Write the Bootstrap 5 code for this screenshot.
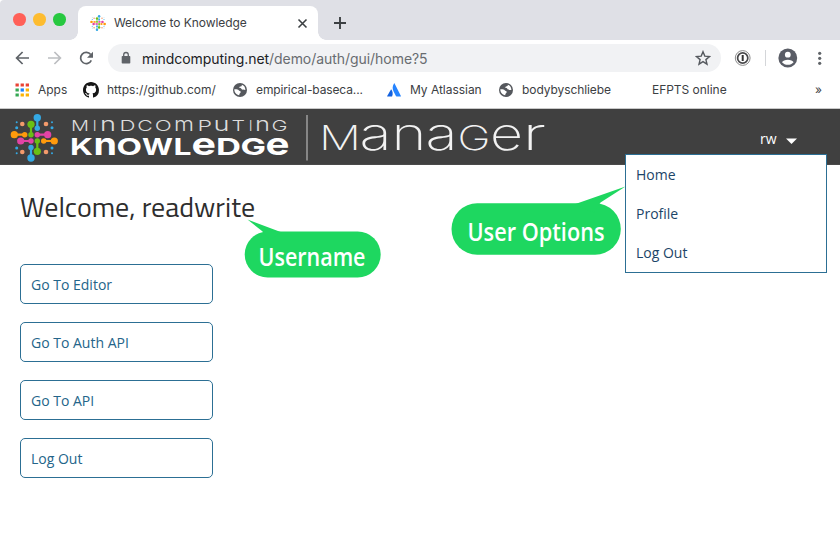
<!DOCTYPE html>
<html lang="en">
<head>
<meta charset="utf-8">
<meta name="viewport" content="width=device-width, initial-scale=1">
<title>Welcome to Knowledge</title>
<link href="https://cdn.jsdelivr.net/npm/bootstrap@5.3.0/dist/css/bootstrap.min.css" rel="stylesheet">
<style>
  body { width: 840px; height: 534px; overflow: hidden; font-family: "Open Sans", sans-serif; background: #fff; }
  svg { display: block; flex: none; }
  .chrome { font-family: Inter, sans-serif; color: #3c4043; }
  .tab-strip { height: 40px; background: #dfe0e6; padding: 6px 0 0 13px; border-top-left-radius: 4px; }
  .light { width: 12.6px; height: 12.6px; margin-right: 7.4px; border-radius: 50%; margin-top: 7.4px; }
  .light-close { background: #ff6058; }
  .light-min { background: #fdbc30; }
  .light-max { background: #27c840; }
  .page-tab { width: 240px; height: 34px; margin-left: 5px; padding: 0 10px 0 12px; background: #fff; border-radius: 8px 8px 0 0; font-size: 12px; letter-spacing: -.06px; position: relative; }
  .page-tab::before, .page-tab::after { content: ""; position: absolute; bottom: 0; width: 8px; height: 8px; }
  .page-tab::before { left: -8px; background: radial-gradient(circle at 0 0, transparent 7.5px, #fff 8px); }
  .page-tab::after { right: -8px; background: radial-gradient(circle at 100% 0, transparent 7.5px, #fff 8px); }
  .tool-row { height: 36px; padding-left: 15px; }
  .address { width: 613px; height: 28px; margin-left: 14px; padding: 0 10px 0 12px; border-radius: 14px; background: #f1f2f4; font-size: 14px; letter-spacing: -.05px; color: #202124; }
  .address .path { color: #686c70; }
  .marks { display: grid; grid-template-columns: 68px 150px 154px 112px 153px 163px 10px; height: 33px; padding: 0 0 5px 15px; font-size: 12px; letter-spacing: -.03px; align-items: center; border-bottom: 1px solid #c9c9c9; white-space: nowrap; }
  .site-bar { height: 56px; background: #404040; border-bottom: 1px solid #4a4a4a; }
  .site-bar > svg { overflow: visible; }
  .user-menu { width: 202px; color: #fff; font-size: 14px; padding: 19px 0 0 135px; margin-right: 13px; height: 56px; position: relative; }
  .options { position: absolute; left: 0; top: 45px; width: 202px; height: 119px; background: #fff; border: 1px solid #2c6f94; padding: 0 10px; z-index: 2; }
  .options a { display: block; height: 39px; line-height: 40px; color: #1c4568; text-decoration: none; font-size: 14px; }
  .greeting { font-family: "Titillium Web", Roboto, sans-serif; font-size: 28px; line-height: 34px; color: #2e2e2e; margin: 0; font-weight: 400; }
  .go-list { gap: 18px; margin-top: 40px; }
  .go-btn { width: 193px; height: 40px; border: 1px solid #2c6f94; border-radius: 5px; color: #24658a; font-size: 14px; text-align: left; padding: 0 10px; line-height: 39px; }
  .callouts { position: absolute; left: 240px; top: 180px; z-index: 3; pointer-events: none; }
</style>
</head>
<body>
<svg width="0" height="0" class="position-absolute">
  <defs>
    <g id="emblem">
      <g stroke-width="2.2">
        <path stroke="#34a9e4" d="M37.300 117.700v10.600M31 147.300V158"/>
        <path stroke="#6abf14" d="M31 124.300v10.400M37.300 141v10.300"/>
        <path stroke="#e143a5" d="M37.300 134.700h10.400M20.700 141H31"/>
        <path stroke="#ff9a0c" d="M14.300 134.700h10.400M43.700 141h10.600"/>
      </g>
      <g fill="#34a9e4"><circle cx="37.3" cy="117.7" r="3.7"/><circle cx="37.3" cy="128.3" r="2.7"/><circle cx="31" cy="147.5" r="2.7"/><circle cx="31" cy="158" r="3.7"/>
        <circle cx="16.7" cy="122.3" r="1"/><circle cx="16.7" cy="127.7" r="1.5"/><circle cx="52" cy="122.3" r="1"/><circle cx="52" cy="127.7" r="1.5"/><circle cx="16.7" cy="148" r="1.5"/><circle cx="16.7" cy="153.3" r="1"/><circle cx="52" cy="148" r="1.5"/><circle cx="52" cy="153.3" r="1"/></g>
      <g fill="#6abf14"><circle cx="31" cy="124.3" r="3.6"/><circle cx="31" cy="134.7" r="2.7"/><circle cx="37.3" cy="141" r="2.7"/><circle cx="37.3" cy="151.3" r="3.6"/></g>
      <g fill="#e143a5"><circle cx="37.3" cy="134.7" r="2.7"/><circle cx="47.7" cy="134.7" r="3.6"/><circle cx="20.7" cy="141" r="3.6"/><circle cx="31" cy="141" r="2.7"/></g>
      <g fill="#ff9a0c"><circle cx="14.3" cy="134.7" r="3.6"/><circle cx="24.7" cy="134.7" r="2.7"/><circle cx="43.7" cy="141" r="2.7"/><circle cx="54.3" cy="141" r="3.6"/></g>
      <g fill="#f39a6b"><circle cx="22.3" cy="124" r="2.3"/><circle cx="46" cy="124" r="2.3"/><circle cx="22.3" cy="152" r="2.3"/><circle cx="46" cy="152" r="2.3"/></g>
    </g>
    <g id="globe"><circle cx="7" cy="7" r="7" fill="#55585d"/><path d="M1.300 6.300c1.900 0 3.700-.2 4.400 1 .5 1 2 .4 2 1.700 0 1.100-1.500 1.100-1.500 3.200-2.800-.3-4.900-2.600-4.900-5.900z" fill="#fff"/><path d="M8.800 1.700c.2 1.500-.7 1.700-1.700 1.800-.9.100-.3 1.100-1.500 1.200 2 .1 2.500.4 2.900 1.400.5 1.200 2 .6 3.900 1C12.300 4.300 11.200 2.300 8.800 1.700z" fill="#fff"/></g>
  </defs>
</svg>

<header class="chrome">
  <div class="tab-strip d-flex">
    <span class="light light-close"></span>
    <span class="light light-min"></span>
    <span class="light light-max"></span>
    <div class="page-tab d-flex align-items-center">
      <svg width="16" height="16" viewBox="10 114 48 48"><use href="#emblem"/></svg>
      <span class="ms-2 flex-grow-1 text-nowrap">Welcome to Knowledge</span>
      <svg width="11" height="11" viewBox="0 0 11 11" stroke="#3c4043" stroke-width="1.6"><path d="M1.500 1.500l8 8M9.500 1.500l-8 8"/></svg>
    </div>
    <svg width="12" height="12" viewBox="0 0 12 12" class="ms-3" style="margin-top:11px" stroke="#3c4043" stroke-width="1.9"><path d="M6 0v12M0 6h12"/></svg>
  </div>

  <div class="tool-row d-flex align-items-center">
    <svg width="79" height="16" viewBox="0 0 79 16" fill="none" stroke-width="1.7">
      <path d="M14 8H2M7.600 2L1.600 8l6 6" stroke="#5f6368"/>
      <path d="M33 8h12M39.400 2l6 6-6 6" stroke="#bcbec1"/>
      <path d="M76.300 10.400A5.600 5.600 0 1 1 75.700 4.600" stroke="#5f6368"/><path d="M78 1.700v6h-6z" fill="#5f6368"/>
    </svg>
    <div class="address d-flex align-items-center">
      <svg width="12" height="14" viewBox="0 0 12 14"><rect x="1.700" y="5" width="8.600" height="7.600" rx=".8" fill="#5f6368"/><path d="M3.700 5.500V3.800a2.300 2.300 0 0 1 4.600 0v1.700" fill="none" stroke="#5f6368" stroke-width="1.300"/></svg>
      <span class="flex-grow-1" style="margin-left:10px">mindcomputing.net<span class="path">/demo/auth/gui/home?5</span></span>
      <svg width="16" height="16" viewBox="0 0 16 16" fill="none" stroke="#55595e" stroke-width="1.400"><path d="M8 1.700l1.800 4.400 4.700.4-3.600 3.100 1.100 4.600L8 11.700l-4 2.500 1.100-4.600L1.500 6.500l4.700-.4z"/></svg>
    </div>
    <svg width="106" height="20" viewBox="721 48 106 20">
      <circle cx="742.700" cy="58" r="7.400" fill="#fff" stroke="#8b8b8b" stroke-width="1"/><circle cx="742.700" cy="58" r="5.100" fill="#fff" stroke="#48484a" stroke-width="1.700"/><path d="M742.700 55v6" stroke="#333" stroke-width="2"/>
      <path d="M765.500 50v16" stroke="#d4d6d9"/>
      <circle cx="787.800" cy="58" r="9.400" fill="#5a5d66"/><circle cx="787.800" cy="54.700" r="2.900" fill="#fff"/><path d="M782 62.300c1.300-3.500 10.300-3.500 11.600 0-2.700 3.400-8.900 3.400-11.600 0z" fill="#fff"/>
      <g fill="#5f6368"><circle cx="819.700" cy="53.300" r="1.600"/><circle cx="819.700" cy="58.300" r="1.600"/><circle cx="819.700" cy="63.300" r="1.600"/></g>
    </svg>
  </div>

  <nav class="marks">
    <span class="d-flex align-items-center"><svg width="15" height="14" viewBox="0 0 15 14"><g fill="#ea4335"><path d="M.5.500h3.300v3H.5zM5.600.500h3.300v3H5.600zM10.700.500H14v3h-3.300z"/></g><g fill="#34a853"><path d="M.5 5.400h3.300v3.200H.5zM.5 10.400h3.300v3.200H.5z"/></g><path d="M5.600 5.400h3.300v3.200H5.600z" fill="#1a84ff"/><path d="M10.700 5.400H14v3.200h-3.300zM5.600 10.400h3.300v3.200H5.600zM10.700 10.400H14v3.200h-3.300z" fill="#fbb305"/></svg><span class="ms-2">Apps</span></span>
    <span class="d-flex align-items-center"><svg width="16" height="16" viewBox="0 0 16 16"><path fill="#161616" d="M8 0C3.580 0 0 3.580 0 8c0 3.540 2.290 6.530 5.470 7.590.4.070.55-.17.55-.38 0-.19-.01-.82-.01-1.490-2.010.37-2.530-.49-2.690-.94-.09-.23-.48-.94-.82-1.130-.28-.15-.68-.52-.01-.53.63-.01 1.080.58 1.230.82.72 1.210 1.870.87 2.330.66.070-.52.28-.87.51-1.070-1.780-.2-3.640-.89-3.640-3.950 0-.87.31-1.590.82-2.150-.08-.2-.36-1.020.08-2.120 0 0 .67-.21 2.200.82.640-.18 1.320-.27 2-.27s1.360.09 2 .27c1.530-1.040 2.200-.82 2.200-.82.440 1.100.16 1.920.08 2.120.51.560.82 1.270.82 2.150 0 3.070-1.870 3.750-3.650 3.950.29.250.54.730.54 1.480 0 1.070-.01 1.930-.01 2.200 0 .21.15.46.55.38A8.010 8.010 0 0 0 16 8c0-4.420-3.580-8-8-8z"/></svg><span class="ms-2" style="letter-spacing:.02px">https://github.com/</span></span>
    <span class="d-flex align-items-center"><svg width="14" height="14" viewBox="0 0 14 14"><use href="#globe"/></svg><span style="margin-left:9px;letter-spacing:-.12px">empirical-baseca...</span></span>
    <span class="d-flex align-items-center"><svg width="14" height="14" viewBox="0 0 14 14"><path d="M4.100 6.200c1.700 2 2 4.300 1 7.400H.6c-.4 0-.6-.3-.4-.7z" fill="#1261e0"/><path d="M7 .5c-1.700 2.700-1.700 5.300-.4 7.900l2.300 4.700c.1.300.3.500.7.500h3.900c.4 0 .5-.3.400-.7L7.600.6C7.400.2 7.200.2 7 .5z" fill="#2684ff"/></svg><span style="margin-left:9px">My Atlassian</span></span>
    <span class="d-flex align-items-center"><svg width="14" height="14" viewBox="0 0 14 14"><use href="#globe"/></svg><span style="margin-left:9px;letter-spacing:-.08px">bodybyschliebe</span></span>
    <span>EFPTS online</span>
    <span>»</span>
  </nav>
</header>

<div class="site-bar d-flex justify-content-between">
  <svg width="560" height="55" viewBox="0 109 560 55">
    <use href="#emblem"/>
    <g font-family="Inter, sans-serif" fill="#f2f2f2">
      <text y="131" font-size="14.500" font-weight="300" fill="#dcdcdc"><tspan x="71" textLength="18" lengthAdjust="spacingAndGlyphs">M</tspan><tspan x="92.700">I</tspan><tspan x="100" font-size="19" textLength="16" lengthAdjust="spacingAndGlyphs">n</tspan><tspan x="119.500" textLength="16" lengthAdjust="spacingAndGlyphs">D</tspan><tspan x="137.300" textLength="15.500" lengthAdjust="spacingAndGlyphs">C</tspan><tspan x="154.800" textLength="17" lengthAdjust="spacingAndGlyphs">O</tspan><tspan x="174" font-size="19" textLength="20" lengthAdjust="spacingAndGlyphs">m</tspan><tspan x="197.500" textLength="14.500" lengthAdjust="spacingAndGlyphs">P</tspan><tspan x="213.500" font-size="19" textLength="16" lengthAdjust="spacingAndGlyphs">u</tspan><tspan x="231.500" textLength="13.500" lengthAdjust="spacingAndGlyphs">T</tspan><tspan x="248.700">I</tspan><tspan x="255" font-size="19" textLength="15" lengthAdjust="spacingAndGlyphs">n</tspan><tspan x="271.500" textLength="16" lengthAdjust="spacingAndGlyphs">G</tspan></text>
      <text y="155" font-size="23.500" font-weight="700" fill="#fff"><tspan x="70" textLength="23" lengthAdjust="spacingAndGlyphs">K</tspan><tspan x="93.500" font-size="31" textLength="23.500" lengthAdjust="spacingAndGlyphs">n</tspan><tspan x="116.500" textLength="25.500" lengthAdjust="spacingAndGlyphs">O</tspan><tspan x="142" textLength="31" lengthAdjust="spacingAndGlyphs">W</tspan><tspan x="173.500" textLength="18" lengthAdjust="spacingAndGlyphs">L</tspan><tspan x="191.500" font-size="31" textLength="24.500" lengthAdjust="spacingAndGlyphs">e</tspan><tspan x="216" textLength="25" lengthAdjust="spacingAndGlyphs">D</tspan><tspan x="240.500" textLength="25.500" lengthAdjust="spacingAndGlyphs">G</tspan><tspan x="265.500" font-size="31" textLength="24" lengthAdjust="spacingAndGlyphs">e</tspan></text>
      <path d="M307 115v45.500" stroke="#999" stroke-width="1.600"/>
      <text y="150" font-size="34" font-weight="200"><tspan x="319" textLength="42" lengthAdjust="spacingAndGlyphs">M</tspan><tspan x="359.500" font-size="44.500" textLength="32" lengthAdjust="spacingAndGlyphs">a</tspan><tspan x="391.500" font-size="44.500" textLength="35" lengthAdjust="spacingAndGlyphs">n</tspan><tspan x="425.500" font-size="44.500" textLength="32" lengthAdjust="spacingAndGlyphs">a</tspan><tspan x="457.500" textLength="33" lengthAdjust="spacingAndGlyphs">G</tspan><tspan x="490" font-size="44.500" textLength="33" lengthAdjust="spacingAndGlyphs">e</tspan><tspan x="522.500" font-size="44.500" textLength="23.500" lengthAdjust="spacingAndGlyphs">r</tspan></text>
    </g>
  </svg>
  <div class="user-menu">
    <span class="d-flex align-items-center"><span>rw</span><svg class="mt-1" width="11" height="6" viewBox="0 0 11 6" style="margin-left:9px"><path d="M0 .5h11L5.500 6z" fill="#fff"/></svg></span>
    <div class="options"><a href="#">Home</a><a href="#">Profile</a><a href="#">Log Out</a></div>
  </div>
</div>

<main class="d-flex flex-column align-items-start" style="padding:25px 0 0 20px">
  <h1 class="greeting">Welcome, readwrite</h1>
  <div class="go-list d-flex flex-column">
    <a class="btn go-btn" href="#">Go To Editor</a>
    <a class="btn go-btn" href="#">Go To Auth API</a>
    <a class="btn go-btn" href="#">Go To API</a>
    <a class="btn go-btn" href="#">Log Out</a>
  </div>
</main>

<svg class="callouts" width="390" height="105" viewBox="240 180 390 105">
  <g fill="#1ed760"><rect x="244.700" y="231.500" width="136" height="46" rx="23"/><path d="M247.500 219.500L282 232.500l-12 7-8-8.500z"/>
  <rect x="451.500" y="203.300" width="169.300" height="51.500" rx="25.700"/><path d="M625.500 186.500L574 204.500l20 8 6.500-10z"/></g>
  <g fill="#fff" font-family="'Open Sans', sans-serif" font-weight="600" font-size="24.300">
    <text x="258.500" y="266.300" textLength="107" lengthAdjust="spacingAndGlyphs">Username</text>
    <text x="467.500" y="241" textLength="137" lengthAdjust="spacingAndGlyphs">User Options</text>
  </g>
</svg>
<script src="https://cdn.jsdelivr.net/npm/bootstrap@5.3.0/dist/js/bootstrap.bundle.min.js"></script>
</body>
</html>
